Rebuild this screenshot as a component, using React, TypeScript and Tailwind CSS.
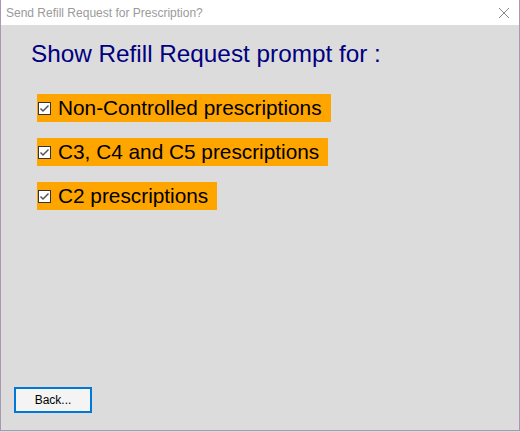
import React, { useState } from 'react';

// Options shown in the refill prompt dialog
const OPTIONS = [
  { id: 'nc', label: 'Non-Controlled prescriptions' },
  { id: 'c345', label: 'C3, C4 and C5 prescriptions' },
  { id: 'c2', label: 'C2 prescriptions' },
];

const CheckRow: React.FC<{ label: string; checked: boolean; onToggle: () => void }> = ({ label, checked, onToggle }) => (
  <label
    onClick={onToggle}
    className="flex items-center self-start bg-[#ffa500] h-[28px] pl-[1px] pr-[9px] cursor-default select-none"
  >
    <span className="w-[13px] h-[13px] border border-[#333] bg-white flex items-center justify-center mr-[7px]">
      {checked && (
        <svg width="11" height="11" viewBox="0 0 11 11">
          <path d="M1.5 5.5 L4 8 L9.5 2.5" stroke="#555" strokeWidth="1.5" fill="none" />
        </svg>
      )}
    </span>
    <span className="text-[20.8px] text-black leading-none">{label}</span>
  </label>
);

const App: React.FC = () => {
  const [checked, setChecked] = useState<Record<string, boolean>>({ nc: true, c345: true, c2: true });

  return (
    <div className="w-[520px] h-[432px] bg-[#dcdcdc] font-['Liberation_Sans',Arial,sans-serif]">
      <div className="w-full h-[431px] flex flex-col border-l border-r border-b border-[#a898b2]">
        {/* Title bar */}
        <div className="h-[25px] bg-white flex items-center justify-between pl-[5px] pr-[9px]">
          <span className="text-[12px] text-[#9a9a9a]">
            Send Refill Request for Prescription?
          </span>
          <svg width="12" height="12" viewBox="0 0 12 12">
            <path d="M1 1 L11 11 M11 1 L1 11" stroke="#888" strokeWidth="1" />
          </svg>
        </div>

        <div className="flex-1 flex flex-col pl-[36px] pt-[17px]">
          <h1 className="text-[24.3px] text-[#000080] leading-none -ml-[6px] mb-[28px]">
            Show Refill Request prompt for :
          </h1>
          <div className="flex flex-col gap-[16px]">
            {OPTIONS.map(o => (
              <CheckRow
                key={o.id}
                label={o.label}
                checked={checked[o.id]}
                onToggle={() => setChecked(s => ({ ...s, [o.id]: !s[o.id] }))}
              />
            ))}
          </div>
          <div className="flex-1" />
          <button className="self-start -ml-[23px] mb-[17px] w-[78px] h-[26px] border-2 border-[#0078d7] bg-[#f4f4f4] text-[12px] text-black">
            Back...
          </button>
        </div>
      </div>
    </div>
  );
};

export default App;
